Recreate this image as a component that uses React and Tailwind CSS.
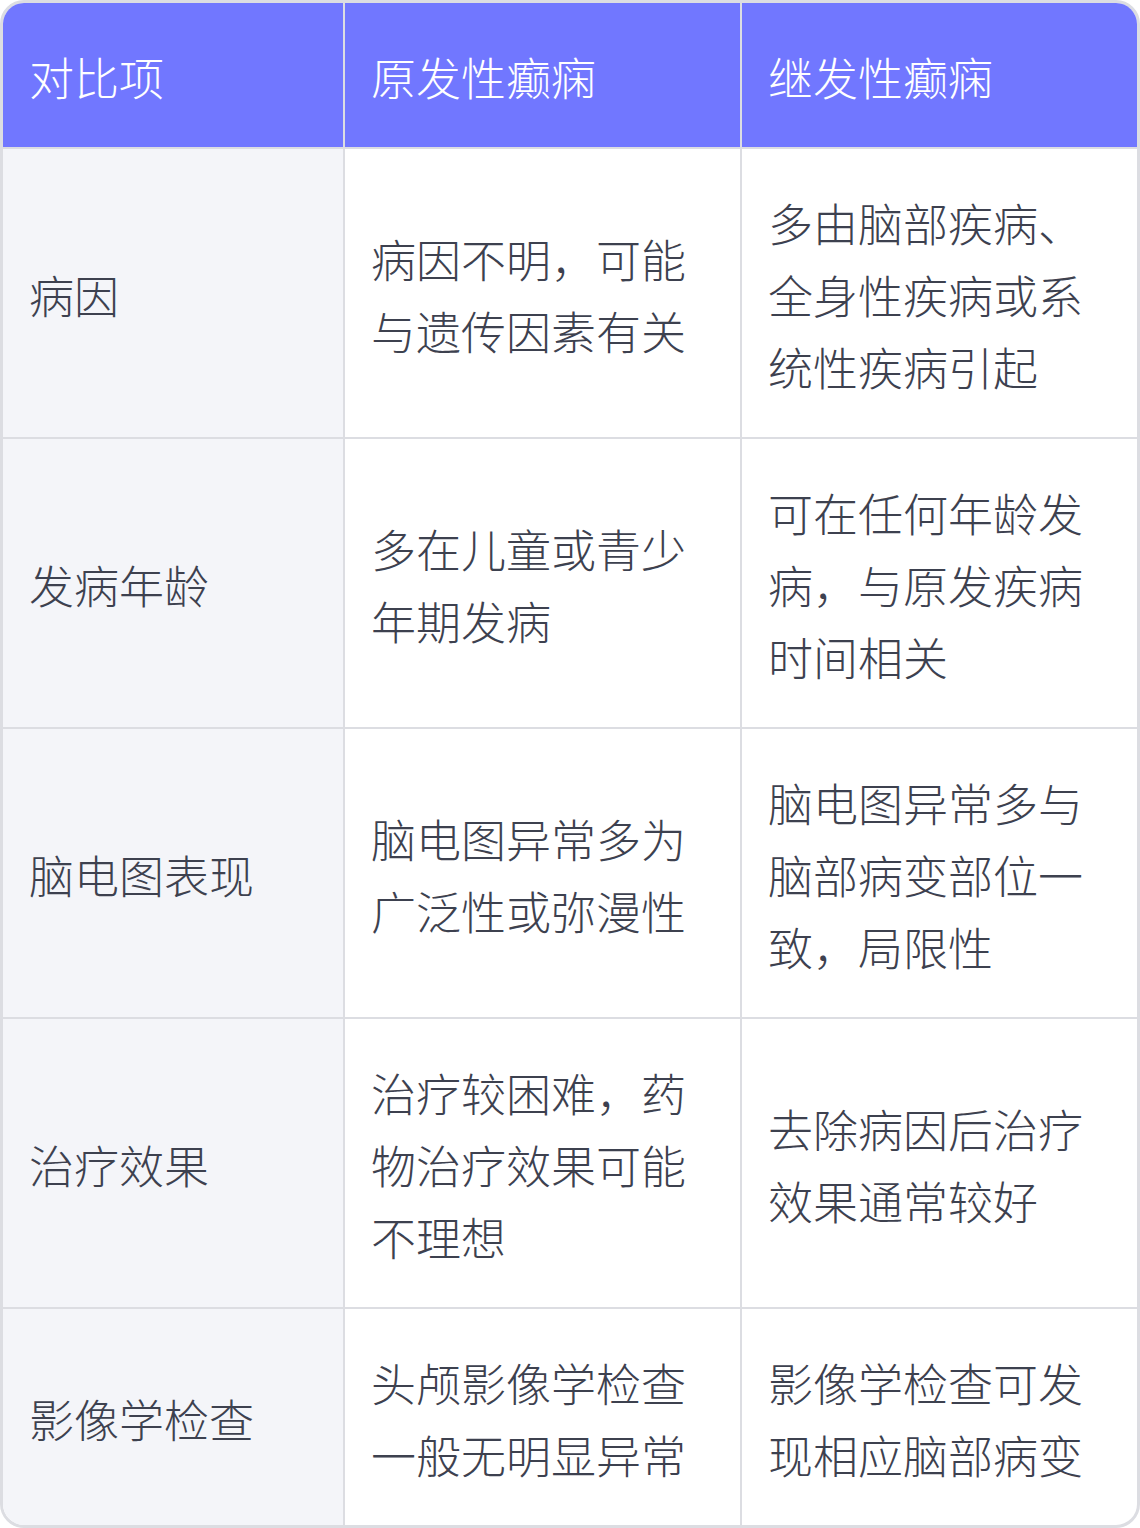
import React from "react";

const rows = [
  ["病因", "病因不明，可能与遗传因素有关", "多由脑部疾病、全身性疾病或系统性疾病引起"],
  ["发病年龄", "多在儿童或青少年期发病", "可在任何年龄发病，与原发疾病时间相关"],
  ["脑电图表现", "脑电图异常多为广泛性或弥漫性", "脑电图异常多与脑部病变部位一致，局限性"],
  ["治疗效果", "治疗较困难，药物治疗效果可能不理想", "去除病因后治疗效果通常较好"],
  ["影像学检查", "头颅影像学检查一般无明显异常", "影像学检查可发现相应脑部病变"],
];

const font = { fontFamily: '"Noto Sans CJK SC", "Noto Sans", sans-serif' };

export default function App() {
  return (
    <div className="w-[1140px] bg-white" style={font}>
      <div className="border-[3px] border-[#dcdde2] rounded-[24px] overflow-hidden">
        <div className="flex bg-[#7177ff] text-white text-[45px] font-light leading-[72px] border-b-2 border-[#dcdde2]">
          <div className="w-[342px] border-r-2 border-[#dcdde2] pl-[26px] pr-[28px] pt-[38px] pb-[34px]">对比项</div>
          <div className="w-[397px] border-r-2 border-[#dcdde2] pl-[26px] pr-[28px] pt-[38px] pb-[34px]">原发性癫痫</div>
          <div className="w-[395px] pl-[26px] pr-[28px] pt-[38px] pb-[34px]">继发性癫痫</div>
        </div>
        {rows.map((r, i) => (
          <div
            key={i}
            className={
              i < rows.length - 1
                ? "flex text-[#3d414f] text-[45px] font-light leading-[72px] border-b-2 border-[#dcdde2]"
                : "flex text-[#3d414f] text-[45px] font-light leading-[72px]"
            }
          >
            <div className="w-[342px] bg-[#f4f5f9] border-r-2 border-[#dcdde2] pl-[26px] pr-[28px] pt-[38px] pb-[34px] flex items-center">
              <span>{r[0]}</span>
            </div>
            <div className="w-[397px] border-r-2 border-[#dcdde2] pl-[26px] pr-[28px] pt-[38px] pb-[34px] flex items-center">
              <span>{r[1]}</span>
            </div>
            <div className="w-[395px] pl-[26px] pr-[28px] pt-[38px] pb-[34px] flex items-center">
              <span>{r[2]}</span>
            </div>
          </div>
        ))}
      </div>
    </div>
  );
}
